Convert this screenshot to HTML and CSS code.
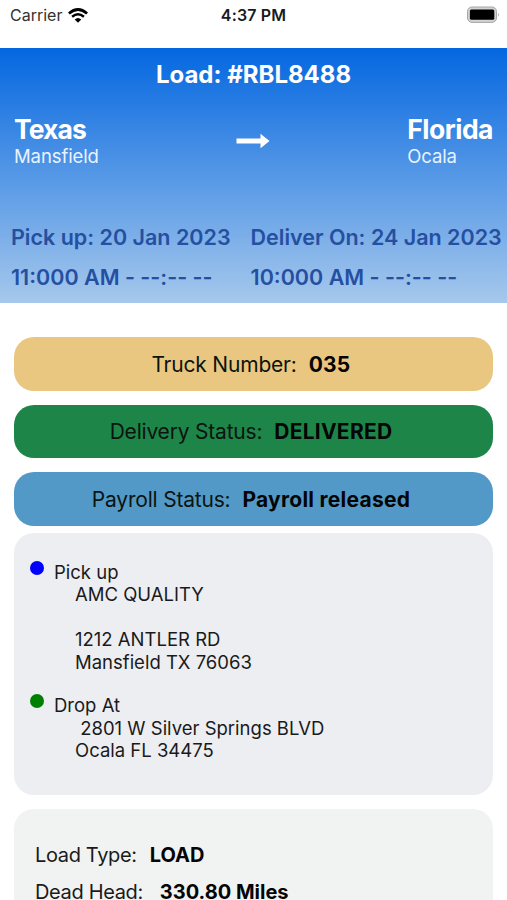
FILE: index.html
```
<!DOCTYPE html>
<html lang="en">
<head>
    <meta charset="UTF-8">
    <title>Load Details</title>
    <link rel="stylesheet" href="styles.css">
</head>

<body>
    <div class="status-bar">
        <div class="carrier">
            <span>Carrier</span>
            <svg class="wifi" width="20" height="15" viewBox="0 0 20 15">
                <path d="M0.9 5.4 Q10 -2.4 19.1 5.4" fill="none" stroke="#000" stroke-width="2.7"/>
                <path d="M4.1 8.7 Q10 3.7 15.9 8.7" fill="none" stroke="#000" stroke-width="2.5"/>
                <path d="M6.7 11.4 Q10 8.4 13.3 11.4 L10 14.8 Z" fill="#000"/>
            </svg>
        </div>
        <span class="time">4:37 PM</span>
        <svg class="battery" width="34" height="18" viewBox="0 0 34 18">
            <rect x="1.5" y="1" width="29" height="15.4" rx="4.5" fill="#d2d2d2" stroke="#a5a5a5" stroke-width="1"/>
            <rect x="3.9" y="3.6" width="24.4" height="10.2" rx="1.5" fill="#000"/>
            <path d="M32 6.8 Q33.8 8.8 32 10.8 Z" fill="#a5a5a5"/>
        </svg>
    </div>

    <div class="header">
        <h2 class="title">Load: #RBL8488</h2>
        <div class="route">
            <div class="place">
                <p class="state texas">Texas</p>
                <p class="city">Mansfield</p>
            </div>
            <svg class="arrow" width="34" height="16" viewBox="0 0 34 16">
                <path d="M0.5 5.4 H24.5 V0.8 L33.5 8 L24.5 15.2 V10.6 H0.5 Z" fill="#fff"/>
            </svg>
            <div class="place">
                <p class="state">Florida</p>
                <p class="city">Ocala</p>
            </div>
        </div>
        <div class="dates">
            <div class="date">
                <p class="day">Pick up: 20 Jan 2023</p>
                <p class="hour">11:000 AM <span class="empty">- --:-- --</span></p>
            </div>
            <div class="date">
                <p class="day">Deliver On: 24 Jan 2023</p>
                <p class="hour">10:000 AM <span class="empty">- --:-- --</span></p>
            </div>
        </div>
    </div>

    <div class="content">
        <div class="pill truck"><span>Truck Number:</span><b>035</b></div>
        <div class="pill delivery"><span>Delivery Status:</span><b>DELIVERED</b></div>
        <div class="pill payroll"><span>Payroll Status:</span><b>Payroll released</b></div>

        <div class="stops">
            <div class="stop">
                <span class="dot blue"></span>
                <div class="stop-text">
                    <p>Pick up</p>
                    <div class="address">
                        <p>AMC QUALITY</p>
                        <br>
                        <p>1212 ANTLER RD</p>
                        <p>Mansfield TX 76063</p>
                    </div>
                </div>
            </div>
            <div class="stop">
                <span class="dot green"></span>
                <div class="stop-text">
                    <p>Drop At</p>
                    <div class="address">
                        <p>&nbsp;2801 W Silver Springs BLVD</p>
                        <p>Ocala FL 34475</p>
                    </div>
                </div>
            </div>
        </div>

        <div class="details">
            <p class="detail"><span>Load Type:</span><b>LOAD</b></p>
            <p class="detail head"><span>Dead Head:</span><b>330.80 Miles</b></p>
        </div>
    </div>
</body>
</html>
```
FILE: styles.css
```
*{
    margin: 0;
    padding: 0;
    box-sizing: border-box;
}
body{
    height: 900px;
    overflow: hidden;
    background-color: white;
    color: #1a1a1a;
    font-family: Inter, "Liberation Sans", sans-serif;
}
.status-bar{
    height: 48px;
    padding: 0 7px 18px 10px;
    display: grid;
    grid-template-columns: 1fr auto 1fr;
    align-items: center;
    font-size: 16px;
    line-height: 30px;
}
.carrier{
    display: flex;
    align-items: center;
    gap: 6px;
    color: #333;
}
.time{
    margin-right: 3px;
    font-weight: 600;
    letter-spacing: 0.15px;
}
.battery{
    justify-self: end;
}
.header{
    height: 255px;
    padding-top: 12px;
    background: linear-gradient(#0467e0, #a6c8ec);
    color: white;
}
.title{
    font-size: 24px;
    line-height: 30px;
    font-weight: 700;
    text-align: center;
}
.route{
    display: flex;
    justify-content: space-between;
    padding: 0 14px;
    margin-top: 24px;
}
.state{
    font-size: 26.5px;
    line-height: 30px;
    font-weight: 700;
    letter-spacing: -0.5px;
}
.texas{
    letter-spacing: -0.9px;
}
.city{
    font-size: 18.5px;
    line-height: 24px;
    letter-spacing: -0.1px;
    color: #eaf3fd;
}
.arrow{
    margin-top: 19px;
}
.dates{
    display: flex;
    gap: 20px;
    margin-top: 49px;
    padding-left: 11px;
    color: #254fa0;
    font-size: 21.5px;
    line-height: 40px;
    font-weight: 600;
    white-space: nowrap;
}
.empty{
    font-feature-settings: "calt" 0;
}
.content{
    padding: 34px 14px 0;
}
.pill{
    height: 53.5px;
    margin-bottom: 14px;
    padding: 1px 5px 0 0;
    border-radius: 20px;
    display: flex;
    justify-content: center;
    align-items: center;
    gap: 12px;
    font-size: 21px;
    letter-spacing: -0.2px;
    color: #0c1410;
}
b{
    font-weight: 700;
    letter-spacing: 0.25px;
    color: #050505;
}
.truck{
    background-color: #eac780;
}
.delivery{
    background-color: #1e8548;
}
.payroll{
    background-color: #5299c7;
    margin-bottom: 7px;
}
.stops{
    height: 262px;
    padding: 28px 16px 0;
    border-radius: 20px;
    background-color: #edeef2;
    font-size: 18.5px;
    line-height: 22.5px;
}
.stop{
    display: flex;
    gap: 10px;
    margin-bottom: 21px;
}
.dot{
    width: 14px;
    height: 14px;
    border-radius: 50%;
}
.blue{
    background-color: blue;
}
.green{
    background-color: green;
}
.address{
    padding-left: 21px;
}
.details{
    height: 120px;
    margin-top: 14px;
    padding: 28px 21px;
    border-radius: 20px;
    background-color: #f1f3f3;
    font-size: 20px;
    line-height: 37px;
    letter-spacing: -0.35px;
}
.details b{
    letter-spacing: 0;
}
.detail{
    display: flex;
    gap: 13px;
}
.head{
    gap: 17px;
}
```
